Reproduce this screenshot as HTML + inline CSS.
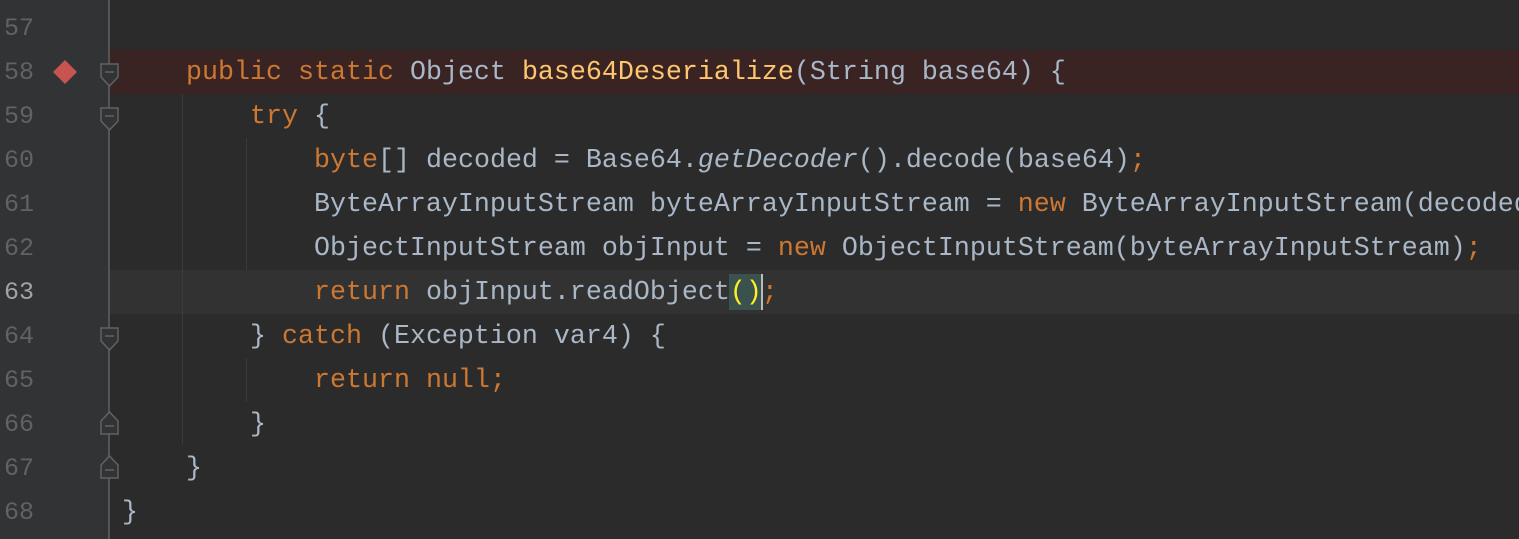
<!DOCTYPE html><html><head><style>
body{margin:0;width:1519px;height:539px;background:#2b2b2b;overflow:hidden;position:relative;font-family:"Liberation Mono",monospace;}
.g{position:absolute;left:0;top:0;width:109px;height:539px;background:#313335;}
.gl{position:absolute;left:108px;top:0;width:2px;height:539px;background:#555;}
.row{position:absolute;left:110px;width:1409px;height:44px;}
.ln{position:absolute;left:4px;width:40px;font-size:25px;color:#606366;height:44px;line-height:46px;}
.c{position:absolute;left:122px;height:44px;line-height:47px;font-size:26.67px;color:#a9b7c6;white-space:pre;}
.k{color:#cc7832}.m{color:#ffc66d}.i{font-style:italic}
.ig{position:absolute;width:1px;background:#3b3b3b;}
.f{position:absolute;left:100px;}
</style></head><body>
<div class="g"></div>
<div class="row" style="top:50px;background:#3a2323"></div>
<div class="row" style="top:270px;background:#323232"></div>
<div class="gl"></div>
<div class="ig" style="left:182px;top:94px;height:350px"></div>
<div class="ig" style="left:246px;top:138px;height:132px"></div>
<div class="ig" style="left:246px;top:358px;height:44px"></div>
<div class="ln" style="top:6px">57</div>
<div class="ln" style="top:50px">58</div>
<div class="ln" style="top:94px">59</div>
<div class="ln" style="top:138px">60</div>
<div class="ln" style="top:182px">61</div>
<div class="ln" style="top:226px">62</div>
<div class="ln" style="top:270px;color:#a4a3a3">63</div>
<div class="ln" style="top:314px">64</div>
<div class="ln" style="top:358px">65</div>
<div class="ln" style="top:402px">66</div>
<div class="ln" style="top:446px">67</div>
<div class="ln" style="top:490px">68</div>
<svg style="position:absolute;left:51px;top:58px" width="28" height="28"><path d="M14 2 L26 14 L14 26 L2 14Z" fill="#c75450"/></svg>
<svg class="f" style="top:63px" width="19" height="25"><path d="M1 1H18V14L9.5 23L1 14Z" fill="#313335" stroke="#606366" stroke-width="1.5"/><path d="M5 9H14" stroke="#606366" stroke-width="1.5"/></svg>
<svg class="f" style="top:107px" width="19" height="25"><path d="M1 1H18V14L9.5 23L1 14Z" fill="#313335" stroke="#606366" stroke-width="1.5"/><path d="M5 9H14" stroke="#606366" stroke-width="1.5"/></svg>
<svg class="f" style="top:327px" width="19" height="25"><path d="M1 1H18V14L9.5 23L1 14Z" fill="#313335" stroke="#606366" stroke-width="1.5"/><path d="M5 9H14" stroke="#606366" stroke-width="1.5"/></svg>
<svg class="f" style="top:410px" width="19" height="25"><path d="M1 24H18V11L9.5 2L1 11Z" fill="#313335" stroke="#606366" stroke-width="1.5"/><path d="M5 16H14" stroke="#606366" stroke-width="1.5"/></svg>
<svg class="f" style="top:454px" width="19" height="25"><path d="M1 24H18V11L9.5 2L1 11Z" fill="#313335" stroke="#606366" stroke-width="1.5"/><path d="M5 16H14" stroke="#606366" stroke-width="1.5"/></svg>
<div class="c" style="top:50px">    <span class="k">public static</span> Object <span class="m">base64Deserialize</span>(String base64) {</div>
<div class="c" style="top:94px">        <span class="k">try</span> {</div>
<div class="c" style="top:138px">            <span class="k">byte</span>[] decoded = Base64.<span class="i">getDecoder</span>().decode(base64)<span class="k">;</span></div>
<div class="c" style="top:182px">            ByteArrayInputStream byteArrayInputStream = <span class="k">new</span> ByteArrayInputStream(decoded)<span class="k">;</span></div>
<div class="c" style="top:226px">            ObjectInputStream objInput = <span class="k">new</span> ObjectInputStream(byteArrayInputStream)<span class="k">;</span></div>
<div style="position:absolute;left:729px;top:274px;width:32px;height:36px;background:#3b514d"></div>
<div style="position:absolute;left:761px;top:274px;width:2px;height:36px;background:#bbbbbb"></div>
<div class="c" style="top:270px">            <span class="k">return</span> objInput.readObject<span style="color:#ffef28">()</span><span class="k">;</span></div>
<div class="c" style="top:314px">        } <span class="k">catch</span> (Exception var4) {</div>
<div class="c" style="top:358px">            <span class="k">return null;</span></div>
<div class="c" style="top:402px">        }</div>
<div class="c" style="top:446px">    }</div>
<div class="c" style="top:490px">}</div>
</body></html>
